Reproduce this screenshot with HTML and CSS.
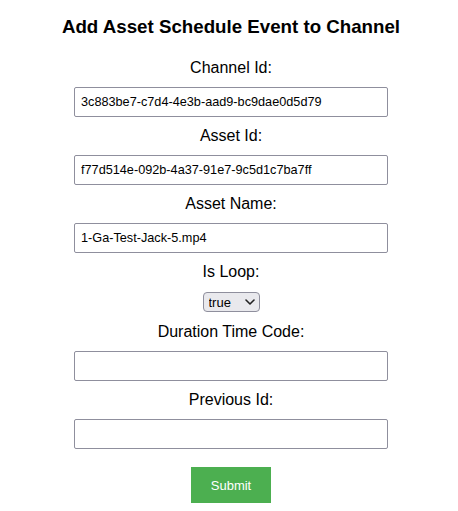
FILE: index.html
```html
<!DOCTYPE html>
<html>
<head>
<meta charset="utf-8">
<link rel="stylesheet" href="styles.css">
</head>
<body>
<form class="form">
  <h1 class="title">Add Asset Schedule Event to Channel</h1>
  <label class="label label-first">Channel Id:</label>
  <input class="field" type="text" value="3c883be7-c7d4-4e3b-aad9-bc9dae0d5d79">
  <label class="label">Asset Id:</label>
  <input class="field" type="text" value="f77d514e-092b-4a37-91e7-9c5d1c7ba7ff">
  <label class="label">Asset Name:</label>
  <input class="field" type="text" value="1-Ga-Test-Jack-5.mp4">
  <label class="label">Is Loop:</label>
  <div class="select-wrap">
    <select class="select">
      <option>true</option>
      <option>false</option>
    </select>
    <svg class="chevron" width="10" height="6" viewBox="0 0 10 6"><path d="M1 1 L5 5 L9 1" fill="none" stroke="#222" stroke-width="1.6" stroke-linecap="round" stroke-linejoin="round"/></svg>
  </div>
  <label class="label label-after-select">Duration Time Code:</label>
  <input class="field" type="text" value="">
  <label class="label">Previous Id:</label>
  <input class="field" type="text" value="">
  <button class="submit" type="button">Submit</button>
</form>
</body>
</html>
```
FILE: styles.css
```css
html, body {
  margin: 0;
  padding: 0;
  background: #ffffff;
}
body {
  font-family: "Liberation Sans", Arial, sans-serif;
  color: #000;
}
.form {
  display: flex;
  flex-direction: column;
  align-items: center;
  padding-left: 4px;
}
.title {
  margin: 15px 0 0;
  font-size: 18.72px;
  line-height: 24px;
  font-weight: bold;
}
.label {
  display: block;
  font-size: 16px;
  line-height: 18px;
  margin: 10px 0;
}
.label-first {
  margin-top: 20px;
}
.label-after-select {
  margin-top: 11px;
}
.field {
  box-sizing: border-box;
  width: 314px;
  height: 30px;
  margin: 0;
  padding: 0 6px;
  border: 1px solid #8f8f9d;
  border-radius: 2px;
  font-family: "Liberation Sans", Arial, sans-serif;
  font-size: 12.7px;
  color: #000;
  background: #fff;
  outline: none;
}
.select-wrap {
  position: relative;
  margin-top: 1px;
  width: 57px;
  height: 20px;
}
.select {
  appearance: none;
  -webkit-appearance: none;
  box-sizing: border-box;
  width: 57px;
  height: 20px;
  margin: 0;
  padding: 0 0 0 5px;
  border: 1px solid #8f8f9d;
  border-radius: 4px;
  background: #e9e9ed;
  font-family: "Liberation Sans", Arial, sans-serif;
  font-size: 13px;
  color: #000;
  outline: none;
}
.chevron {
  position: absolute;
  left: 42px;
  top: 7px;
  pointer-events: none;
}
.submit {
  margin-top: 18px;
  width: 80px;
  height: 36px;
  border: none;
  background: #4caf50;
  color: #fff;
  font-family: "Liberation Sans", Arial, sans-serif;
  font-size: 13px;
  padding: 0;
}
```
